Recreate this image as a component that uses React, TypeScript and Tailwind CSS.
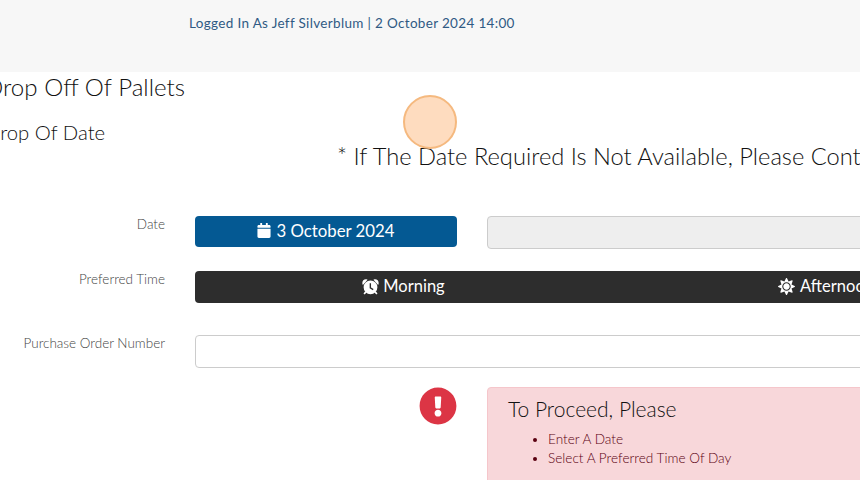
import React from 'react'
import { FaCalendar, FaSun, FaExclamationCircle } from 'react-icons/fa'

const AlarmIcon = () => (
  <svg viewBox="0 0 16 16" className="h-[17px] w-[17px]" fill="currentColor">
    <path d="M.5 6C-.3 3.200 1.600.500 4.800 1.300c.4.100.5.400.2.600L1.300 6.200c-.3.200-.6.100-.8-.2zM15.500 6c.8-2.800-1.100-5.500-4.300-4.700-.4.100-.5.400-.2.600l3.700 4.300c.3.200.6.100.8-.2z" />
    <path d="M3 12.500l-1.600 2 1.100 1 1.800-1.900zM13 12.500l1.600 2-1.100 1-1.800-1.900z" />
    <path
      fillRule="evenodd"
      d="M8 2.300a6.500 6.500 0 1 1 0 13 6.500 6.500 0 0 1 0-13zM7.200 5v4.700l3 1.800.7-1.100-2.400-1.500V5z"
    />
  </svg>
)

const App: React.FC = () => {
  return (
    <div className="relative h-[480px] w-[860px] overflow-hidden bg-white font-['Lato','Open_Sans',sans-serif] text-[#111111]">
      <div className="flex h-[72px] bg-[#f7f7f7] pl-[189px] pt-[14px]">
        <p className="text-[13.500px] leading-[19px] tracking-[0.33px] font-normal text-[#2f5a84]">
          Logged In As Jeff Silverblum | 2 October 2024 14:00
        </p>
      </div>

      <div className="ml-[-15px] w-[1400px]">
        <h2 className="text-[24.100px] leading-[30px] font-light">Drop Off Of Pallets</h2>
        <h3 className="mt-[18px] text-[20.300px] leading-[24px] font-light">Drop Of Date</h3>
        <p className="ml-[352px] mt-[-3px] text-[23.700px] leading-[30px] font-light">
          * If The Date Required Is Not Available, Please Contact Us
        </p>

        <div className="mt-[45px] flex">
          <label className="w-[180px] text-right text-[13.500px] leading-[16px] font-light text-[#444444]">Date</label>
          <div className="ml-[30px] flex items-start">
            <button className="flex h-[31px] w-[262px] items-center justify-center gap-[5px] rounded-[4px] bg-[#045993] pb-[2px] text-[16.800px] font-normal text-white">
              <FaCalendar className="h-[15px] w-[14px]" />
              3 October 2024
            </button>
            <div className="ml-[30px] h-[33px] w-[800px] rounded-[4px] border border-[#cccccc] bg-[#eeeeee]" />
          </div>
        </div>

        <div className="mt-[22px] flex">
          <label className="w-[180px] text-right text-[13.500px] leading-[16px] font-light text-[#444444]">Preferred Time</label>
          <div className="ml-[30px] flex h-[32px] w-[1100px] rounded-[4px] bg-[#2d2d2d] pb-[2px] text-[16.500px] font-normal text-white">
            <div className="flex w-[416px] items-center justify-center gap-[4px] pl-[1px]">
              <AlarmIcon />
              Morning
            </div>
            <div className="flex w-[430px] items-center justify-center gap-[5px]">
              <FaSun className="h-[17px] w-[17px]" />
              Afternoon
            </div>
          </div>
        </div>

        <div className="mt-[32px] flex">
          <label className="w-[180px] text-right text-[13.500px] leading-[16px] font-light text-[#444444]">Purchase Order Number</label>
          <div className="ml-[30px] h-[33px] w-[1100px] rounded-[4px] border border-[#cccccc] bg-white" />
        </div>

        <div className="mt-[19px] flex">
          <div className="flex w-[472px] justify-end">
            <FaExclamationCircle className="h-[38px] w-[38px] text-[#dc3545]" />
          </div>
          <div className="ml-[30px] h-[200px] w-[800px] rounded-[4px] border border-[#f5c6cb] bg-[#f8d7da] pl-[20px] pt-[8px] text-[#5a0010]">
            <h4 className="text-[21px] leading-[26px] font-light text-[#111111]">To Proceed, Please</h4>
            <ul className="mt-[8px] list-disc pl-[40px] text-[13.600px] leading-[19px] font-light">
              <li>Enter A Date</li>
              <li>Select A Preferred Time Of Day</li>
            </ul>
          </div>
        </div>
      </div>

      {/* click marker from the screen recording */}
      <div className="absolute left-[403px] top-[95px] h-[54px] w-[54px] rounded-full border-[2px] border-[#f5b97f] bg-[#fdb97f]/50" />
    </div>
  )
}

export default App
